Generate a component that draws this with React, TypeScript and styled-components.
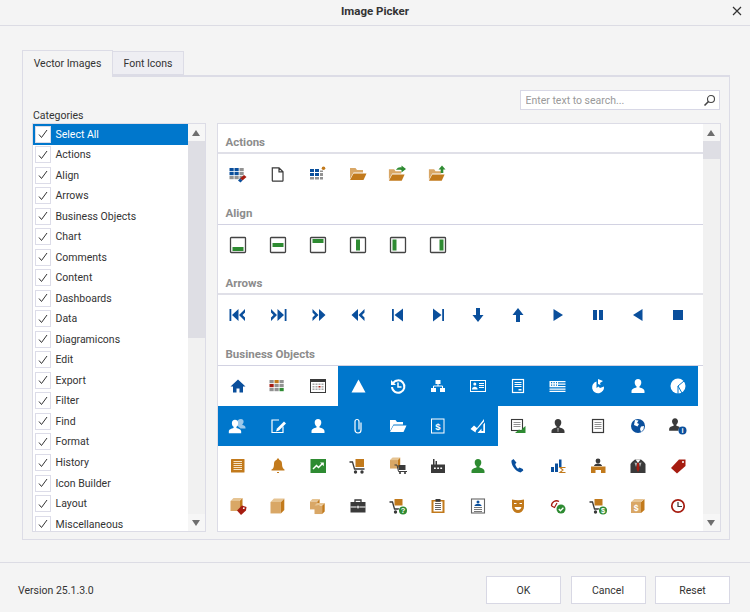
import React, { ReactNode } from "react";
import styled, { createGlobalStyle } from "styled-components";

const N = "#0a4f9c";
const O = "#c27a1c";
const L = "#d9a766";
const G = "#2e8b32";
const R = "#a61c10";
const D = "#3a3a3a";
const Y = "#929292";
const SEL = "#0077cc";
const CC = "currentColor";

const GlobalStyle = createGlobalStyle`
  html, body {
    margin: 0;
    padding: 0;
    background: #f4f4f4;
    font-family: Roboto, "Open Sans", sans-serif;
    font-size: 10.500px;
    color: #333;
  }
  * { box-sizing: border-box; }
`;

/* small shared drawings */
const Tiles = ({ colors }: { colors: string[] }) => (
  <>
    {colors.map((c, i) => (
      <rect key={i} x={1.500 + (i % 3) * 5} y={4 + Math.floor(i / 3) * 4} width={4.200} height={3.200} fill={c} />
    ))}
  </>
);
const Folder = ({ back = L, front = O }: { back?: string; front?: string }) => (
  <>
    <path d="M2 4h5.500L9 6h6v2.500H5.500L2 15z" fill={back} />
    <path d="M5.500 9.500H18.500L15.500 16H2z" fill={front} />
  </>
);
const Person = ({ c = CC }: { c?: string }) => (
  <path d="M10 3c2.100 0 3.300 1.500 3.300 3.500 0 1.600-.8 3.100-1.800 3.800v1.200c2.200.6 5 1.400 5 3.800V17h-13v-1.700c0-2.400 2.800-3.200 5-3.800v-1.200c-1-.7-1.800-2.200-1.800-3.800C6.700 4.500 7.900 3 10 3z" fill={c} />
);
const Box = ({ x = 0, y = 0, s = 1 }: { x?: number; y?: number; s?: number }) => (
  <g transform={`translate(${x} ${y}) scale(${s})`}>
    <path d="M0 3h9v10H0z" fill={L} />
    <path d="M9 3l3-3v10l-3 3z" fill={O} />
    <path d="M0 3l3-3h9L9 3z" fill="#e6c493" />
  </g>
);
const Cart = ({ c = D }: { c?: string }) => (
  <>
    <path d="M1.500 6h3l2 7h10" fill="none" stroke={c} strokeWidth="1.300" />
    <circle cx="7.500" cy="16" r="1.700" fill={c} />
    <circle cx="14" cy="16" r="1.700" fill={c} />
  </>
);
const Lines = ({ c = CC, x = 7, w = 7, y = 6, n = 4 }: { c?: string; x?: number; w?: number; y?: number; n?: number }) => (
  <>
    {Array.from({ length: n }).map((_, i) => (
      <rect key={i} x={x} y={y + i * 2} width={w} height={1} fill={c} />
    ))}
  </>
);
const AlignFrame = ({ x, y, w, h }: { x: number; y: number; w: number; h: number }) => (
  <>
    <rect x="2.500" y="2.500" width="15" height="15" rx="0.800" fill="#fff" stroke="#444" strokeWidth="1.300" />
    <rect x={x} y={y} width={w} height={h} fill={G} />
  </>
);
const DoubleArrow = () => (
  <path d="M4 10l6.500-6v12zM11 10l6-6v3.500L14.500 10l2.500 2.500V16z" fill={N} />
);
const Mirror = ({ children }: { children: ReactNode }) => (
  <g transform="matrix(-1 0 0 1 20 0)">{children}</g>
);
const Badge = ({ c, t, cx = 15, cy = 15 }: { c: string; t: string; cx?: number; cy?: number }) => (
  <>
    <circle cx={cx} cy={cy} r="4" fill={c} />
    <text x={cx} y={cy + 2.800} textAnchor="middle" fontSize="7.500" fontWeight="700" fontFamily="Liberation Sans, sans-serif" fill="#fff">
      {t}
    </text>
  </>
);

const ACTIONS: ReactNode[] = [
  <>
    <Tiles colors={[N, N, Y, N, N, Y, Y, Y, Y]} />
    <path d="M12 14.500l4-3.500 2.500 2-4 3.500z" fill={R} />
    <path d="M10 16.500l2-2 2.500 2-2 2z" fill={N} />
  </>,
  <path d="M4.300 3.800h6.700l4 4v8.700a.7.7 0 0 1-.7.7H5a.7.7 0 0 1-.7-.7zM11 3.800v4h4" fill="none" stroke={D} strokeWidth="1.200" />,
  <>
    <path d="M2 5h4v3H2zM7 5h4v3H7zM2 9h4v3H2zM7 9h4v3H7z" fill={N} />
    <path d="M12 6.500h3V8h-3zM12 9h3v3h-3zM2 13h4v2.500H2zM7 13h4v2.500H7zM12 13h3v2.500h-3z" fill={Y} />
    <circle cx="15.500" cy="4.300" r="1.800" fill={O} />
  </>,
  <Folder />,
  <>
    <g transform="translate(-1 1.500) scale(.95)"><Folder /></g>
    <path d="M8 6c1.500-2.500 3.500-3 5.500-2.500V1.500L18 5l-4.500 3.500V6C11.500 5.500 9.500 5.500 8 6z" fill={G} />
  </>,
  <>
    <g transform="translate(-1 1.500) scale(.95)"><Folder /></g>
    <path d="M12.700 9V5.500H10.500L14 1.500l3.500 4h-2.200V9z" fill={G} />
  </>,
];

const ALIGN: ReactNode[] = [
  <AlignFrame x={4.500} y={12} w={11} h={4} />,
  <AlignFrame x={4.500} y={8} w={11} h={4} />,
  <AlignFrame x={4.500} y={4} w={11} h={4} />,
  <AlignFrame x={8} y={4.500} w={4} h={11} />,
  <AlignFrame x={4.500} y={4.500} w={4} h={11} />,
  <AlignFrame x={11.500} y={4.500} w={4} h={11} />,
];

const ARROWS: ReactNode[] = [
  <>
    <rect x="1.500" y="4" width="1.800" height="12" fill={N} />
    <DoubleArrow />
  </>,
  <Mirror>
    <rect x="1.500" y="4" width="1.800" height="12" fill={N} />
    <DoubleArrow />
  </Mirror>,
  <Mirror>
    <g transform="translate(-1.500 0)"><DoubleArrow /></g>
  </Mirror>,
  <g transform="translate(-.500 0)"><DoubleArrow /></g>,
  <>
    <rect x="4" y="4" width="1.800" height="12" fill={N} />
    <path d="M6.500 10L15 3.500v13z" fill={N} />
  </>,
  <Mirror>
    <rect x="4" y="4" width="1.800" height="12" fill={N} />
    <path d="M6.500 10L15 3.500v13z" fill={N} />
  </Mirror>,
  <path d="M8 3h4v7h3.500L10 17l-5.500-7H8z" fill={N} />,
  <path d="M8 17h4v-7h3.500L10 3l-5.500 7H8z" fill={N} />,
  <path d="M5.500 4L15 10l-9.500 6z" fill={N} />,
  <path d="M5 5h4v10H5zM11 5h4v10h-4z" fill={N} />,
  <path d="M14.500 4L5 10l9.500 6z" fill={N} />,
  <rect x="5" y="5" width="10" height="10" fill={N} />,
];

const BUSINESS: { icon: ReactNode; selected?: boolean }[] = [
  { icon: <path d="M10 3.500L2.500 10.500H5V16.500h3.500v-4h3v4H15v-6h2.500z" fill={N} /> },
  {
    icon: <Tiles colors={[Y, O, Y, R, Y, Y, Y, Y, G]} />,
  },
  {
    icon: (
      <>
        <rect x="2.500" y="3.500" width="15" height="13" fill="#fff" stroke={D} strokeWidth="1" />
        <rect x="2.500" y="3.500" width="15" height="2.500" fill={D} />
        <path d="M4.500 7.500h2v1.500h-2zM7.500 7.500h2v1.500h-2zM10.500 7.500h2v1.500h-2zM13.500 7.500h2v1.500h-2zM4.500 10h2v1.500h-2zM7.500 10h2v1.500h-2zM13.500 10h2v1.500h-2zM4.500 12.500h2V14h-2zM7.500 12.500h2V14h-2zM10.500 12.500h2V14h-2zM13.500 12.500h2V14h-2z" fill="#a8a8a8" />
        <rect x="10.500" y="10" width="2" height="1.500" fill={R} />
      </>
    ),
  },
  { selected: true, icon: <path d="M10.500 3.500L17.500 16.500H3.500z" fill={CC} /> },
  {
    selected: true,
    icon: (
      <>
        <path d="M4.800 7.500A6.200 6.200 0 1 1 4 11" fill="none" stroke={CC} strokeWidth="2" />
        <path d="M3 4v5h5z" fill={CC} />
        <path d="M10 6.500V11h3.500" fill="none" stroke={CC} strokeWidth="1.500" />
      </>
    ),
  },
  {
    selected: true,
    icon: (
      <>
        <path d="M7.500 4h5v4h-5zM3 12h5v4H3zM12 12h5v4h-5z" fill={CC} />
        <path d="M10 8v2M5.500 12v-2h9v2" fill="none" stroke={CC} strokeWidth="1" />
      </>
    ),
  },
  {
    selected: true,
    icon: (
      <>
        <rect x="2.500" y="4.500" width="15" height="11" fill="none" stroke={CC} strokeWidth="1" />
        <circle cx="6.800" cy="8" r="1.500" fill={CC} />
        <path d="M4 13.500c0-2 1.300-2.800 2.800-2.800s2.800.8 2.800 2.800z" fill={CC} />
        <Lines x={11} w={5} y={7} n={3} />
      </>
    ),
  },
  {
    selected: true,
    icon: (
      <>
        <rect x="4.500" y="3.500" width="11" height="13" fill="none" stroke={CC} strokeWidth="1.200" />
        <Lines x={6.500} w={7} y={6} n={3} />
        <rect x="10.500" y="13" width="3" height="1.500" fill={CC} />
      </>
    ),
  },
  {
    selected: true,
    icon: (
      <>
        <path d="M1.500 5h16v1.200h-7.500v1.300h7.500v1.200H10V10h7.500v1.200h-16zM1.500 12.500h16v1.200h-16zM1.500 14.800h16V16h-16z" fill={CC} />
        <path d="M3 6h1.200v1.200H3zM5.500 6h1.200v1.200H5.500zM8 6h1v1.200H8zM3 8.500h1.200v1.200H3zM5.500 8.500h1.200v1.200H5.500zM8 8.500h1v1.200H8z" fill={SEL} />
      </>
    ),
  },
  {
    selected: true,
    icon: (
      <>
        <path d="M8.500 5.500A6 6 0 1 0 16 10.500l-4 1.500-1.500-1.500L8.500 12z" fill={CC} />
        <path d="M10 3l5 2-3 2 .5 2L10 8z" fill={CC} />
      </>
    ),
  },
  { selected: true, icon: <Person /> },
  {
    selected: true,
    icon: (
      <>
        <circle cx="10" cy="10" r="7.500" fill={CC} />
        <path d="M10 10l6-5M10 10l4 7M10 10v8" stroke={SEL} strokeWidth="1" fill="none" />
      </>
    ),
  },
  {
    selected: true,
    icon: (
      <>
        <path d="M13 3c1.600 0 2.600 1.100 2.600 2.700 0 1-.6 2-1.200 2.500v.9c1.300.4 3.100 1 3.100 2.700v.7h-5L9 9.500c-.4-.8-.5-1.500-.5-2.500 0-2 2-4 4.500-4z" fill="#9cc8ea" />
        <g transform="translate(-2.500 1) scale(.95)"><Person /></g>
      </>
    ),
  },
  {
    selected: true,
    icon: (
      <>
        <path d="M15 10.500v6H4V4h7" fill="none" stroke={CC} strokeWidth="1.200" />
        <path d="M9 12.500l7-7 2 2-7 7-3 1z" fill={CC} />
      </>
    ),
  },
  { selected: true, icon: <Person /> },
  {
    selected: true,
    icon: (
      <path d="M13 6.500v7.500a3 3 0 0 1-6 0V5.500a2 2 0 0 1 4 0v8" fill="none" stroke={CC} strokeWidth="1.200" />
    ),
  },
  { selected: true, icon: <Folder back={CC} front={CC} /> },
  {
    selected: true,
    icon: (
      <>
        <rect x="3.500" y="3" width="12.500" height="14" fill="none" stroke={CC} strokeWidth="1" />
        <text x="9.800" y="13.500" textAnchor="middle" fontSize="9.500" fontWeight="700" fontFamily="Liberation Sans, sans-serif" fill={CC}>
          $
        </text>
      </>
    ),
  },
  {
    selected: true,
    icon: <path d="M2.500 13L6 9.500l3 2.500L16 3v2.500L8 14.500l-.5 2zM17 6.500V17H9.500l4-4.500V15h1.800V8.500z" fill={CC} />,
  },
  {
    icon: (
      <>
        <rect x="3.500" y="3.500" width="11" height="11" fill="#fff" stroke={D} strokeWidth="1.100" />
        <Lines c={Y} x={5.500} w={7} y={6} n={3} />
        <path d="M7 17l4-3.500 2 1 2-2.500 2.500-2v7z" fill={G} />
      </>
    ),
  },
  {
    icon: (
      <>
        <Person c={D} />
        <path d="M9 12h2l-.5 4h-1z" fill="#888" />
      </>
    ),
  },
  {
    icon: (
      <>
        <rect x="4.500" y="3.500" width="11" height="13" fill="#fff" stroke={D} strokeWidth="1.200" />
        <Lines c={Y} x={6.500} w={7} y={6} n={4} />
      </>
    ),
  },
  {
    icon: (
      <>
        <circle cx="10" cy="10" r="7" fill={N} />
        <path d="M7 4l3.500.5L9 7l2 1-1.500 2.500L6 9zM13 10.500l3-.5-.5 3.500-2.500 2.500-1-3z" fill="#fff" />
      </>
    ),
  },
  {
    icon: (
      <>
        <g transform="translate(-2 -.5) scale(.9)"><Person c={D} /></g>
        <circle cx="14.500" cy="14.500" r="4" fill="#fff" />
        <Badge c={N} t="i" cx={14.500} cy={14.500} />
      </>
    ),
  },
  {
    icon: (
      <>
        <rect x="3" y="3" width="13.500" height="13.500" rx=".6" fill={O} />
        <Lines c="#f6e4c6" x={5.500} w={8.500} y={5} n={5} />
      </>
    ),
  },
  {
    icon: (
      <path d="M10 2.500c.8 0 1.200.5 1.200 1.200 2 .6 2.800 2.200 2.800 4.300 0 3 1 4.500 2.500 5.500v1h-13v-1C5 13 6 11.500 6 8c0-2.100.8-3.700 2.800-4.300 0-.7.4-1.200 1.200-1.200zM9 16h2v1H9z" fill={O} />
    ),
  },
  {
    icon: (
      <>
        <rect x="2.500" y="3" width="15.500" height="14" fill={G} />
        <path d="M5 13l3.500-3.500 2 2L14 8" fill="none" stroke="#fff" strokeWidth="1.500" />
        <path d="M12 6.500h3.800v3.800z" fill="#fff" />
      </>
    ),
  },
  {
    icon: (
      <>
        <Cart />
        <rect x="7.500" y="3" width="8.500" height="8" fill={O} />
      </>
    ),
  },
  {
    icon: (
      <>
        <Box x={2} y={1.500} s={0.85} />
        <g transform="translate(6 2)">
          <path d="M.5 7h2.500l1.500 6.500H13" fill="none" stroke={D} strokeWidth="1" />
          <rect x="4.500" y="7" width="7" height="5" fill={D} />
          <circle cx="6" cy="15" r="1.100" fill={D} />
          <circle cx="11" cy="15" r="1.100" fill={D} />
        </g>
      </>
    ),
  },
  {
    icon: (
      <>
        <path d="M3 8.500h14V17H3z" fill={D} />
        <path d="M5 3h1.500v6H5zM7.500 5H9v4H7.500z" fill={D} />
        <path d="M6 11.500h1.800v1.500H6zM9.200 11.500H11v1.500H9.200zM12.300 11.500h1.800v1.500h-1.800z" fill="#fff" />
      </>
    ),
  },
  { icon: <Person c={G} /> },
  {
    icon: (
      <path d="M5.500 3L3.500 4.500c-.8 3.800 3.700 11 9 12l2.800-2-.5-1.500-3.300-1.500-1.500 1.200C8.500 11.500 7.500 9.500 7.200 8l1.300-1.200z" fill={N} />
    ),
  },
  {
    icon: (
      <>
        <path d="M3 11h3v5H3zM7 7.500h3V16H7z" fill={N} />
        <path d="M11 3.500h2.500V11H11z" fill={N} />
        <path d="M17.500 11.500H12l3 2.500-3 2.500h5.500" fill="none" stroke={O} strokeWidth="1.100" />
      </>
    ),
  },
  {
    icon: (
      <>
        <circle cx="10" cy="5" r="2.400" fill={D} />
        <path d="M6 10c0-1.500 2-2.500 4-2.500s4 1 4 2.500z" fill={D} />
        <path d="M3 10.500h14.500v6.500h-4.500v-3H7.500v3H3z" fill={O} />
      </>
    ),
  },
  {
    icon: (
      <>
        <path d="M4 6l3-2.500h6L16 6l1.500 2v9h-15V8z" fill={D} />
        <path d="M7.500 3.500L10 7l2.500-3.500z" fill="#fff" />
        <path d="M9 7h2l.5 6-1.500 3-1.500-3z" fill={R} />
        <path d="M6.500 6.500L9 7l-1 4zM13.500 6.500L11 7l1 4z" fill="#bbb" />
      </>
    ),
  },
  {
    icon: (
      <>
        <path d="M11 3.500h6.500v6.500L9 17.500l-6-5.500z" fill={R} />
        <circle cx="15" cy="6" r="1" fill="#fff" />
      </>
    ),
  },
  {
    icon: (
      <>
        <Box x={2.500} y={2} s={1} />
        <path d="M9 14.500l5-5 4.500 1.500-.5 3.500-5 4.500z" fill={R} />
        <circle cx="15.800" cy="12.200" r=".9" fill="#fff" />
      </>
    ),
  },
  { icon: <Box x={2.500} y={2.500} s={1.150} /> },
  {
    icon: (
      <>
        <Box x={2} y={3} s={0.8} />
        <Box x={6.500} y={7} s={0.85} />
      </>
    ),
  },
  {
    icon: (
      <>
        <path d="M7 6V4h6v2" fill="none" stroke={D} strokeWidth="1.300" />
        <rect x="2.500" y="6" width="15" height="10.500" fill={D} />
        <path d="M2.500 10.500h15v1h-15z" fill="#fff" />
        <rect x="9" y="9.500" width="2" height="3" fill="#fff" stroke={D} strokeWidth=".5" />
      </>
    ),
  },
  {
    icon: (
      <>
        <Cart />
        <rect x="6.500" y="3" width="8" height="6.500" fill={O} />
        <circle cx="15" cy="14.500" r="4.500" fill="#fff" />
        <Badge c={G} t="?" cy={14.500} />
      </>
    ),
  },
  {
    icon: (
      <>
        <rect x="3.500" y="4" width="13" height="13" fill={O} />
        <rect x="5.500" y="5.500" width="9" height="10" fill="#fff" />
        <rect x="7.500" y="3" width="5" height="2.800" fill={D} />
        <Lines c="#666" x={7} w={6} y={7} n={4} />
      </>
    ),
  },
  {
    icon: (
      <>
        <rect x="3.500" y="3" width="13" height="14" fill="#fff" stroke="#666" strokeWidth="1.100" />
        <circle cx="10" cy="6" r="1.500" fill={N} />
        <path d="M6.500 10c0-1.500 1.500-2 3.500-2s3.500.5 3.500 2z" fill={N} />
        <Lines c="#777" x={6} w={8} y={11} n={3} />
      </>
    ),
  },
  {
    icon: (
      <>
        <path d="M4 3.500c4 1 8 1 12 0v7c0 4-3 6.500-6 6.500s-6-2.500-6-6.500z" fill={O} />
        <path d="M6 7.500h2.500M11.500 7.500H14" stroke="#fff" strokeWidth="1.200" />
        <path d="M6.500 11h7c-.5 2-2 3-3.500 3s-3-1-3.500-3z" fill="#fff" />
      </>
    ),
  },
  {
    icon: (
      <>
        <path d="M3.500 10a5 5 0 0 1 7.500-4.500" fill="none" stroke={R} strokeWidth="1.300" />
        <path d="M3.500 10l3 1.500L9 7" fill="none" stroke={R} strokeWidth="1.200" />
        <circle cx="13" cy="13" r="4.500" fill={G} />
        <path d="M10.800 13l1.600 1.700 3-3" fill="none" stroke="#fff" strokeWidth="1.300" />
      </>
    ),
  },
  {
    icon: (
      <>
        <Cart />
        <rect x="6.500" y="3" width="8" height="6.500" fill={O} />
        <circle cx="15" cy="14.500" r="4.500" fill="#fff" />
        <Badge c={G} t="$" cy={14.500} />
      </>
    ),
  },
  {
    icon: (
      <>
        <path d="M3 6h10v11H3z" fill={L} />
        <path d="M13 6l3.500-3v11L13 17z" fill={O} />
        <path d="M3 6l3.500-3h10L13 6z" fill="#e6c493" />
        <text x="8" y="15" textAnchor="middle" fontSize="8.500" fontWeight="700" fontFamily="Liberation Sans, sans-serif" fill="#fff">
          $
        </text>
      </>
    ),
  },
  {
    icon: (
      <>
        <circle cx="10" cy="10" r="6.200" fill="#fff" stroke={R} strokeWidth="1.700" />
        <path d="M10 6v4.500h4" fill="none" stroke={D} strokeWidth="1.200" />
      </>
    ),
  },
];

const CATEGORIES = [
  "Select All", "Actions", "Align", "Arrows", "Business Objects", "Chart", "Comments",
  "Content", "Dashboards", "Data", "Diagramicons", "Edit", "Export", "Filter", "Find",
  "Format", "History", "Icon Builder", "Layout", "Miscellaneous",
];

const Dialog = styled.div`
  width: 750px;
  height: 612px;
  display: flex;
  flex-direction: column;
  overflow: hidden;
`;

const TitleBar = styled.header`
  position: relative;
  height: 26px;
  flex: none;
  display: flex;
  align-items: center;
  justify-content: center;
  border-bottom: 1px solid #dcdce4;
  font-weight: 700;
  font-size: 11.500px;
  padding-bottom: 4px;
`;

const CloseButton = styled.button`
  position: absolute;
  right: 8px;
  top: 6px;
  width: 10px;
  height: 10px;
  padding: 0;
  border: none;
  background: none;
  display: flex;
`;

const Main = styled.main`
  flex: 1;
  padding: 24px 20px 0 22px;
  display: flex;
  flex-direction: column;
`;

const TabStrip = styled.div`
  height: 25px;
  display: flex;
  align-items: flex-end;
  position: relative;
  z-index: 1;
`;

const Tab = styled.div<{ $active?: boolean }>`
  height: ${(p) => (p.$active ? "27px" : "24px")};
  margin-bottom: ${(p) => (p.$active ? "-2px" : "0")};
  padding-top: ${(p) => (p.$active ? "4px" : "3px")};
  width: ${(p) => (p.$active ? "91px" : "71px")};
  display: flex;
  align-items: flex-start;
  justify-content: center;
  line-height: 18px;
  background: ${(p) => (p.$active ? "#f4f4f4" : "#eeeef3")};
  border: 2px solid #dcdce6;
  border-width: 1.500px 1.500px ${(p) => (p.$active ? "0" : "1px")} ${(p) => (p.$active ? "1.500px" : "0")};
`;

const Pane = styled.section`
  width: 708px;
  height: 465px;
  border: 1.500px solid #dcdce6;
  border-top-width: 2px;
  padding: 13px 8.500px 0;
  display: grid;
  grid-template-columns: 174px 504px;
  grid-template-rows: 33px 409px;
  column-gap: 11px;
`;

const FieldLabel = styled.div`
  align-self: end;
  line-height: 15px;
  padding-left: 1.500px;
`;

const SearchBox = styled.div`
  justify-self: end;
  align-self: start;
  margin-right: 1px;
  width: 200px;
  height: 20px;
  display: flex;
  align-items: center;
  background: #fff;
  border: 1.500px solid #d8d8e6;
  padding: 0 3px 0 5px;
`;

const SearchInput = styled.input`
  flex: 1;
  min-width: 0;
  border: none;
  outline: none;
  padding: 0;
  background: none;
  font: inherit;
  &::placeholder {
    color: #999;
    opacity: 1;
  }
`;

const ListFrame = styled.div`
  border: 1.500px solid #dcdce6;
  display: flex;
  overflow: hidden;
  background: #fff;
`;

const CategoryList = styled.ul`
  flex: 1;
  margin: 0;
  padding: 0;
  list-style: none;
  overflow: hidden;
`;

const CategoryRow = styled.li<{ $selected?: boolean }>`
  height: 20.530px;
  display: flex;
  align-items: center;
  gap: 5px;
  padding-left: 2px;
  background: ${(p) => (p.$selected ? SEL : "transparent")};
  color: ${(p) => (p.$selected ? "#fff" : "#333")};
`;

const CheckBox = styled.span`
  width: 16px;
  height: 17px;
  flex: none;
  background: #fff;
  border: 1.500px solid #dcdce8;
  display: flex;
  align-items: center;
  justify-content: center;
`;

const ScrollBar = styled.div`
  width: 17px;
  flex: none;
  display: flex;
  flex-direction: column;
  background: #f1f1f1;
`;

const ScrollButton = styled.div`
  height: 17px;
  flex: none;
  display: flex;
  align-items: center;
  justify-content: center;
  background: #f6f6f6;
`;

const ScrollThumb = styled.div<{ $size: number }>`
  height: ${(p) => p.$size}px;
  flex: none;
  background: #dedee4;
`;

const ScrollTrack = styled.div`
  flex: 1;
`;

const Arrow = styled.span<{ $down?: boolean }>`
  width: 0;
  height: 0;
  border-left: 4.500px solid transparent;
  border-right: 4.500px solid transparent;
  ${(p) => (p.$down ? "border-top: 6px solid #6e6e6e;" : "border-bottom: 6px solid #6e6e6e;")}
`;

const Gallery = styled.div`
  flex: 1;
  overflow: hidden;
`;

const GroupTitle = styled.h3<{ $thin?: boolean }>`
  margin: 0;
  height: ${(p) => (p.$thin ? "31px" : "30px")};
  padding: ${(p) => (p.$thin ? "12px" : "11px")} 0 0 8px;
  font-size: 11.500px;
  line-height: 15px;
  font-weight: 700;
  color: #8c8c8c;
  border-bottom: ${(p) => (p.$thin ? "1px solid #d2d2e2" : "2px solid #e0e0e8")};
`;

const IconGrid = styled.div`
  display: grid;
  grid-template-columns: repeat(12, 40px);
  grid-auto-rows: 40px;
`;

const IconCell = styled.div<{ $selected?: boolean }>`
  display: flex;
  align-items: center;
  justify-content: center;
  background: ${(p) => (p.$selected ? SEL : "#fff")};
  color: ${(p) => (p.$selected ? "#fff" : N)};
`;

const Footer = styled.footer`
  height: 50px;
  flex: none;
  margin-top: 22px;
  border-top: 1.500px solid #dcdce4;
  display: flex;
  align-items: center;
  padding: 4px 20px 0 18px;
  gap: 9.500px;
`;

const Version = styled.span`
  margin-right: auto;
  padding-top: 1px;
`;

const ActionButton = styled.button`
  width: 75px;
  height: 28px;
  padding: 1px 0 0;
  background: #fff;
  border: 1.500px solid #d8d8e4;
  font: inherit;
  color: #333;
`;

const Icon = ({ children }: { children: ReactNode }) => (
  <svg width="20" height="20" viewBox="0 0 20 20">
    {children}
  </svg>
);

const Group = ({ title, thin, icons }: { title: string; thin?: boolean; icons: { icon: ReactNode; selected?: boolean }[] }) => (
  <>
    <GroupTitle $thin={thin}>{title}</GroupTitle>
    <IconGrid>
      {icons.map((item, i) => (
        <IconCell key={i} $selected={item.selected}>
          <Icon>{item.icon}</Icon>
        </IconCell>
      ))}
    </IconGrid>
  </>
);

const wrap = (list: ReactNode[]) => list.map((icon) => ({ icon }));

export default function App() {
  return (
    <>
      <GlobalStyle />
      <Dialog>
        <TitleBar>
          Image Picker
          <CloseButton aria-label="Close">
            <svg width="10" height="10" viewBox="0 0 10 10">
              <path d="M1 1l8 8M9 1l-8 8" stroke="#333" strokeWidth="1.200" />
            </svg>
          </CloseButton>
        </TitleBar>
        <Main>
          <TabStrip>
            <Tab $active>Vector Images</Tab>
            <Tab>Font Icons</Tab>
          </TabStrip>
          <Pane>
            <FieldLabel>Categories</FieldLabel>
            <SearchBox>
              <SearchInput placeholder="Enter text to search..." />
              <svg width="13" height="13" viewBox="0 0 13 13">
                <circle cx="8" cy="5" r="3.500" fill="none" stroke="#444" strokeWidth="1.100" />
                <path d="M5.500 7.500L1.500 11.500" stroke="#444" strokeWidth="1.600" />
              </svg>
            </SearchBox>
            <ListFrame>
              <CategoryList>
                {CATEGORIES.map((name, i) => (
                  <CategoryRow key={name} $selected={i === 0}>
                    <CheckBox>
                      <svg width="10" height="10" viewBox="0 0 10 10">
                        <path d="M1 5.500l2.500 3L9 1" fill="none" stroke="#333" strokeWidth="1" />
                      </svg>
                    </CheckBox>
                    {name}
                  </CategoryRow>
                ))}
              </CategoryList>
              <ScrollBar>
                <ScrollButton><Arrow /></ScrollButton>
                <ScrollThumb $size={197} />
                <ScrollTrack />
                <ScrollButton><Arrow $down /></ScrollButton>
              </ScrollBar>
            </ListFrame>
            <ListFrame>
              <Gallery>
                <Group title="Actions" icons={wrap(ACTIONS)} />
                <Group title="Align" thin icons={wrap(ALIGN)} />
                <Group title="Arrows" icons={wrap(ARROWS)} />
                <Group title="Business Objects" thin icons={BUSINESS} />
              </Gallery>
              <ScrollBar>
                <ScrollButton><Arrow /></ScrollButton>
                <ScrollThumb $size={18} />
                <ScrollTrack />
                <ScrollButton><Arrow $down /></ScrollButton>
              </ScrollBar>
            </ListFrame>
          </Pane>
        </Main>
        <Footer>
          <Version>Version 25.1.3.0</Version>
          <ActionButton>OK</ActionButton>
          <ActionButton>Cancel</ActionButton>
          <ActionButton>Reset</ActionButton>
        </Footer>
      </Dialog>
    </>
  );
}
